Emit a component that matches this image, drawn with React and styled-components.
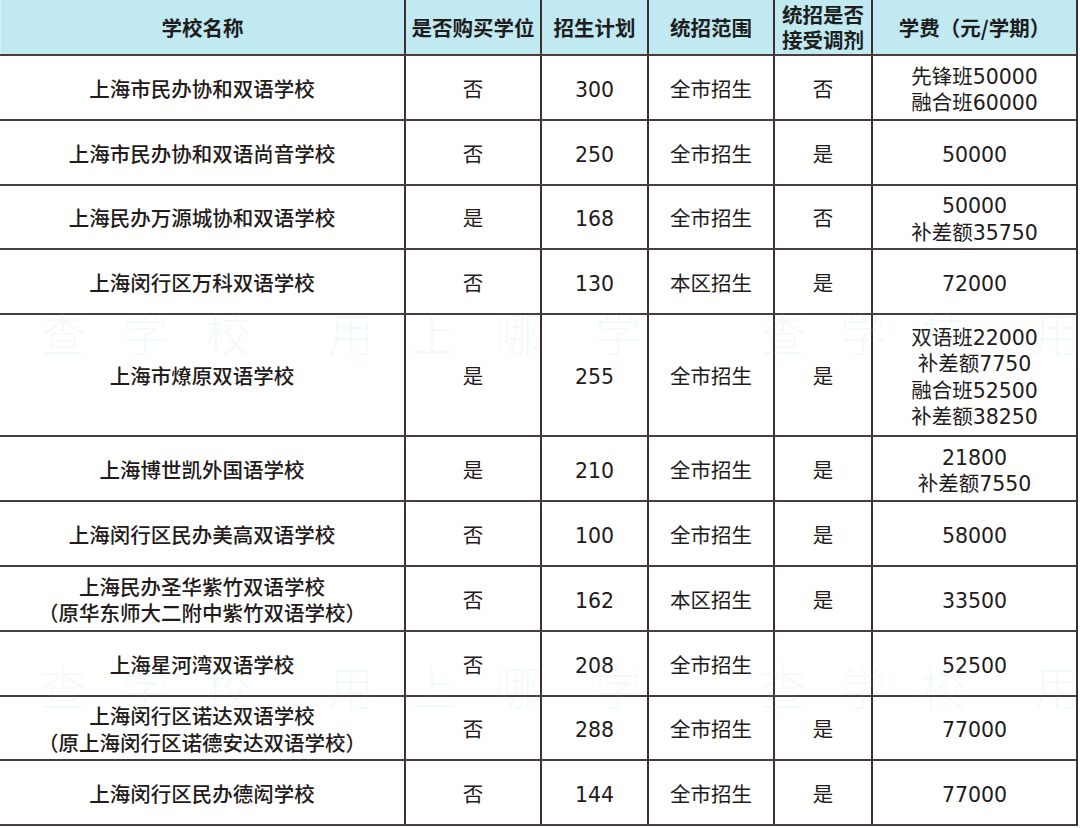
import React from "react";
import styled, { createGlobalStyle } from "styled-components";

const GlobalStyle = createGlobalStyle`
  html, body {
    margin: 0;
    padding: 0;
    background: #ffffff;
  }
  body {
    font-family: "DejaVu Sans", "Noto Sans CJK SC", sans-serif;
    color: #231a1a;
  }
`;

const Page = styled.div`
  position: relative;
  width: 1080px;
  height: 828px;
  overflow: hidden;
  background: #ffffff;
`;

const Sheet = styled.div`
  width: 1078px;
  display: flex;
  flex-direction: column;
  border-right: 2px solid #3d3030;
  box-sizing: border-box;
`;

const Row = styled.div`
  display: grid;
  grid-template-columns: 406px 136px 107px 126px 98px 203px;
  height: ${({ $h }) => $h}px;
  box-sizing: border-box;
  border-bottom: 2px solid #4a3d3d;
  background: ${({ $head }) => ($head ? "#c0e9f1" : "transparent")};
`;

const Cell = styled.div`
  display: flex;
  flex-direction: column;
  align-items: center;
  justify-content: center;
  text-align: center;
  box-sizing: border-box;
  padding-top: 5px;
  border-right: ${({ $last }) => ($last ? "none" : "2px solid #3d3030")};
  font-family: "DejaVu Sans", "Noto Sans CJK SC", sans-serif;
  font-size: 20.5px;
  line-height: 26.5px;
  font-weight: ${({ $bold }) => ($bold ? 500 : 400)};
  color: #231a1a;
  white-space: nowrap;
`;

const HeadCell = styled(Cell)`
  padding-top: 0;
  font-family: "Noto Sans CJK SC", sans-serif;
  font-weight: 700;
  line-height: 25px;
  color: #1e1e1e;
  border-left: ${({ $first }) => ($first ? "1px solid #d6f1f6" : "none")};
`;

const Watermark = styled.div`
  position: absolute;
  inset: 0;
  pointer-events: none;
`;

const MarkChar = styled.span`
  position: absolute;
  left: ${({ $x }) => $x}px;
  top: ${({ $y }) => $y}px;
  font-size: 46px;
  font-weight: 300;
  line-height: 1;
  color: rgba(120, 220, 200, 0.1);
  font-family: "Noto Sans CJK SC", sans-serif;
`;

const headers = [
  ["学校名称"],
  ["是否购买学位"],
  ["招生计划"],
  ["统招范围"],
  ["统招是否", "接受调剂"],
  ["学费（元/学期）"],
];

const rows = [
  { h: 65, name: ["上海市民办协和双语学校"], buy: "否", plan: "300", range: "全市招生", adj: "否", fee: ["先锋班50000", "融合班60000"] },
  { h: 65, name: ["上海市民办协和双语尚音学校"], buy: "否", plan: "250", range: "全市招生", adj: "是", fee: ["50000"] },
  { h: 64, name: ["上海民办万源城协和双语学校"], buy: "是", plan: "168", range: "全市招生", adj: "否", fee: ["50000", "补差额35750"] },
  { h: 65, name: ["上海闵行区万科双语学校"], buy: "否", plan: "130", range: "本区招生", adj: "是", fee: ["72000"] },
  { h: 122, name: ["上海市燎原双语学校"], buy: "是", plan: "255", range: "全市招生", adj: "是", fee: ["双语班22000", "补差额7750", "融合班52500", "补差额38250"] },
  { h: 65, name: ["上海博世凯外国语学校"], buy: "是", plan: "210", range: "全市招生", adj: "是", fee: ["21800", "补差额7550"] },
  { h: 65, name: ["上海闵行区民办美高双语学校"], buy: "否", plan: "100", range: "全市招生", adj: "是", fee: ["58000"] },
  { h: 65, name: ["上海民办圣华紫竹双语学校", "（原华东师大二附中紫竹双语学校）"], buy: "否", plan: "162", range: "本区招生", adj: "是", fee: ["33500"] },
  { h: 65, name: ["上海星河湾双语学校"], buy: "否", plan: "208", range: "全市招生", adj: "", fee: ["52500"] },
  { h: 64, name: ["上海闵行区诺达双语学校", "（原上海闵行区诺德安达双语学校）"], buy: "否", plan: "288", range: "全市招生", adj: "是", fee: ["77000"] },
  { h: 65, name: ["上海闵行区民办德闳学校"], buy: "否", plan: "144", range: "全市招生", adj: "是", fee: ["77000"] },
];

const markChars = [
  ["查", 40], ["学", 122], ["校", 205], ["用", 328], ["上", 410], ["哪", 495],
  ["学", 595], ["查", 760], ["学", 840], ["校", 920], ["用", 1034],
];

const Lines = ({ items }) => items.map((t, i) => <span key={i}>{t}</span>);

export default function App() {
  return (
    <>
      <GlobalStyle />
      <Page>
        <Sheet>
          <Row $h={56} $head>
            {headers.map((h, i) => (
              <HeadCell key={i} $first={i === 0} $last={i === headers.length - 1}>
                <Lines items={h} />
              </HeadCell>
            ))}
          </Row>
          {rows.map((r, i) => (
            <Row key={i} $h={r.h}>
              <Cell $bold>
                <Lines items={r.name} />
              </Cell>
              <Cell>{r.buy}</Cell>
              <Cell>{r.plan}</Cell>
              <Cell>{r.range}</Cell>
              <Cell>{r.adj}</Cell>
              <Cell $last>
                <Lines items={r.fee} />
              </Cell>
            </Row>
          ))}
        </Sheet>
        <Watermark>
          {markChars.map(([c, x], i) => (
            <MarkChar key={`a${i}`} $x={x} $y={308}>
              {c}
            </MarkChar>
          ))}
          {markChars.map(([c, x], i) => (
            <MarkChar key={`b${i}`} $x={x} $y={662}>
              {c}
            </MarkChar>
          ))}
        </Watermark>
      </Page>
    </>
  );
}
